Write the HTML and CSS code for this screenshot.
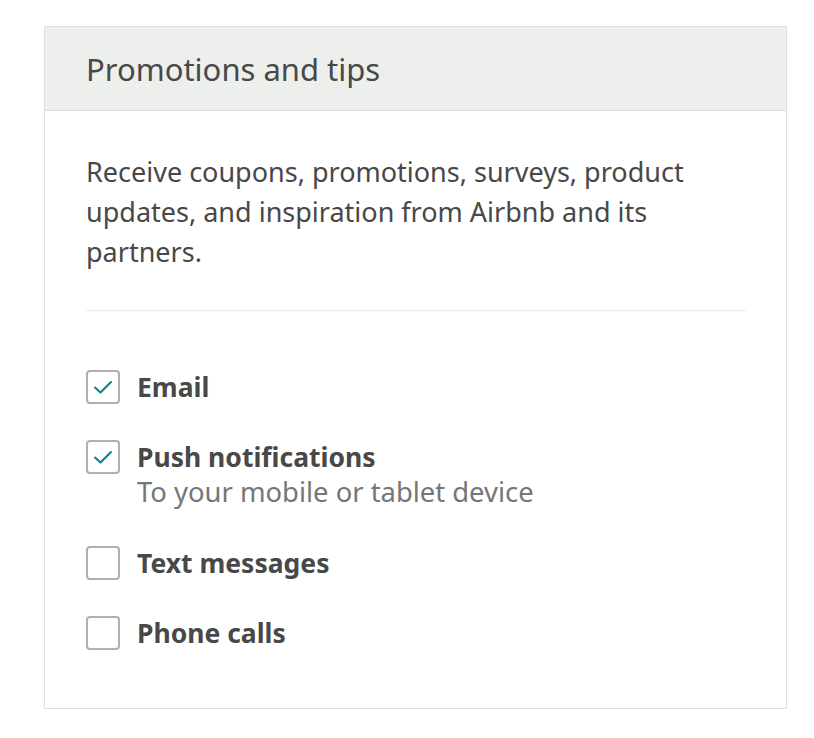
FILE: index.html
```html
<!DOCTYPE html>
<html lang="en">
  <head>
    <meta charset="UTF-8" />
    <title>Promotions and tips</title>
    <link rel="stylesheet" href="styles.css">
  </head>
  <body>
    <div class="panel">
      <div class="panel-header">
        <h2>Promotions and tips</h2>
      </div>
      <div class="panel-body">
        <p class="intro">
          Receive coupons, promotions, surveys, product updates, and
          inspiration from Airbnb and its partners.
        </p>
        <hr class="divider" />

        <!-- Notification channels -->
        <label class="option">
          <span class="checkbox checked">
            <svg viewBox="0 0 24 24"><path d="M4 12.5 L9.5 17.5 L20 7" /></svg>
          </span>
          <span class="option-text">
            <span class="option-title">Email</span>
          </span>
        </label>
        <label class="option">
          <span class="checkbox checked">
            <svg viewBox="0 0 24 24"><path d="M4 12.5 L9.5 17.5 L20 7" /></svg>
          </span>
          <span class="option-text">
            <span class="option-title">Push notifications</span>
            <span class="option-sub">To your mobile or tablet device</span>
          </span>
        </label>
        <label class="option">
          <span class="checkbox"></span>
          <span class="option-text">
            <span class="option-title">Text messages</span>
          </span>
        </label>
        <label class="option">
          <span class="checkbox"></span>
          <span class="option-text">
            <span class="option-title">Phone calls</span>
          </span>
        </label>
      </div>
    </div>
  </body>
</html>
```

FILE: styles.css
```css
body {
  margin: 0;
  font-family: "Noto Sans", sans-serif;
  color: #484848;
  background: #ffffff;
}
.panel {
  box-sizing: border-box;
  width: 743px;
  margin: 26px 0 0 44px;
  border: 1px solid #dce0e0;
}
.panel-header {
  height: 83px;
  display: flex;
  align-items: center;
  padding: 0 41px;
  background-color: #edefed;
  border-bottom: 1px solid #dce0e0;
}
.panel-header h2 {
  margin: 0;
  font-size: 31px;
  font-weight: 400;
}
.panel-body {
  padding: 41px 40px 22px 41px;
}
.intro {
  margin: 0;
  font-size: 27px;
  line-height: 40px;
}
.divider {
  margin: 38px 0 59px;
  border: none;
  border-top: 1px solid #ebebeb;
}
.option {
  display: flex;
  gap: 17px;
  margin-bottom: 36px;
  cursor: pointer;
}
.checkbox {
  box-sizing: border-box;
  flex: none;
  width: 34px;
  height: 34px;
  border: 2px solid #b0b0b0;
  border-radius: 4px;
  display: flex;
  align-items: center;
  justify-content: center;
}
.checkbox svg {
  width: 24px;
  height: 24px;
  fill: none;
  stroke: #008489;
  stroke-width: 2;
  stroke-linecap: round;
  stroke-linejoin: round;
}
.option-text {
  display: flex;
  flex-direction: column;
}
.option-title {
  font-size: 26.5px;
  font-weight: 700;
  line-height: 34px;
}
.option-sub {
  font-size: 27.4px;
  line-height: 36px;
  color: #767676;
}
```
